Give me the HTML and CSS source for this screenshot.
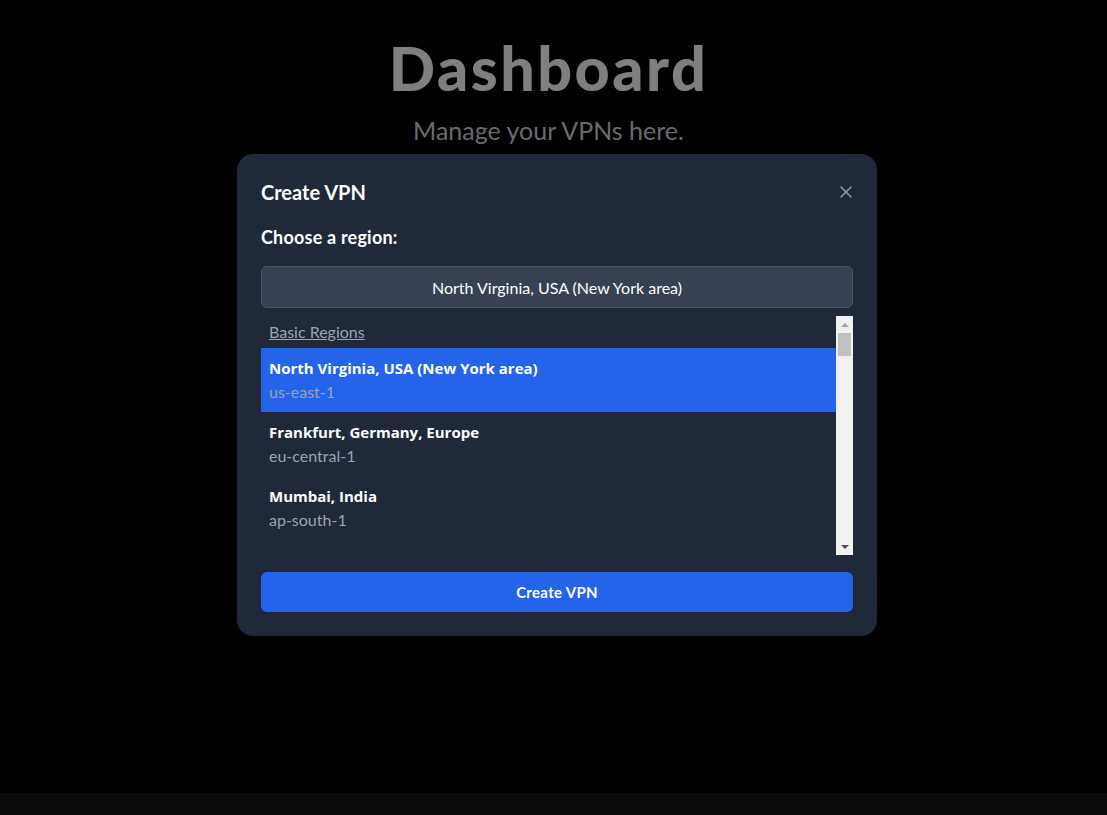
FILE: index.html
```html
<!DOCTYPE html>
<html lang="en">
<head>
  <meta charset="UTF-8">
  <title>Dashboard</title>
  <link rel="stylesheet" href="styles.css">
</head>
<body>

  <main class="page">
    <header class="page-header">
      <h1>Dashboard</h1>
      <p class="subtitle">Manage your VPNs here.</p>
    </header>
  </main>

  <footer class="footer"></footer>

  <div class="overlay">
    <div class="modal">
      <div class="modal-head">
        <h2>Create VPN</h2>
        <button class="close" aria-label="Close">
          <svg width="12" height="12" viewBox="0 0 12 12" fill="none" stroke="currentColor" stroke-width="1.4" stroke-linecap="round">
            <path d="M1 1 L11 11 M11 1 L1 11"/>
          </svg>
        </button>
      </div>

      <h3 class="label">Choose a region:</h3>

      <button class="select">North Virginia, USA (New York area)</button>

      <div class="list-wrap">
        <div class="region-list">
          <div class="group">Basic Regions</div>
          <div class="option selected">
            <div class="name">North Virginia, USA (New York area)</div>
            <div class="code">us-east-1</div>
          </div>
          <div class="option">
            <div class="name">Frankfurt, Germany, Europe</div>
            <div class="code">eu-central-1</div>
          </div>
          <div class="option">
            <div class="name">Mumbai, India</div>
            <div class="code">ap-south-1</div>
          </div>
          <div class="option">
            <div class="name">Canada (Central)</div>
            <div class="code">ca-central-1</div>
          </div>
          <div class="option">
            <div class="name">Tokyo, Japan</div>
            <div class="code">ap-northeast-1</div>
          </div>
          <div class="option">
            <div class="name">Sydney, Australia</div>
            <div class="code">ap-southeast-2</div>
          </div>
        </div>
        <div class="scrollbar">
          <span class="arrow up"></span>
          <span class="thumb"></span>
          <span class="arrow down"></span>
        </div>
      </div>

      <button class="create">Create VPN</button>
    </div>
  </div>

</body>
</html>
```

FILE: styles.css
```css
* {
  box-sizing: border-box;
}

body {
  margin: 0;
  min-height: 100vh;
  background: #000;
  font-family: Lato, "Open Sans", sans-serif;
  color: #fff;
  display: flex;
  flex-direction: column;
}

.page {
  flex: 1;
}

.page-header {
  text-align: center;
  padding-top: 34px;
  padding-right: 10px;
}

.page-header h1 {
  margin: 0;
  font-size: 61px;
  font-weight: 900;
  line-height: 68px;
  letter-spacing: 2.5px;
  color: #fff;
}

.subtitle {
  margin: 13px 0 0;
  font-size: 25px;
  line-height: 30px;
  color: #d1d5db;
}

.footer {
  height: 22px;
  background: #181818;
}

/* modal */
.overlay {
  position: fixed;
  inset: 0;
  background: rgba(0, 0, 0, 0.5);
  display: flex;
  justify-content: center;
  align-items: flex-start;
  padding-top: 154px;
  padding-left: 7px;
}

.modal {
  width: 640px;
  background: #1f2937;
  border-radius: 16px;
  padding: 24px;
}

.modal-head {
  display: flex;
  align-items: center;
  justify-content: space-between;
}

.modal-head h2 {
  margin: 0;
  font-size: 20px;
  font-weight: 700;
  line-height: 28px;
}

.close {
  background: none;
  border: none;
  color: #9ca3af;
  padding: 0;
  margin-right: 1px;
  display: flex;
  cursor: pointer;
}

.label {
  margin: 17px 0 0;
  font-size: 18px;
  font-weight: 700;
  line-height: 28px;
  letter-spacing: 0.2px;
}

.select {
  display: block;
  width: 100%;
  margin-top: 15px;
  height: 42px;
  background: #374151;
  border: 1px solid #4b5563;
  border-radius: 6px;
  color: #fff;
  font-family: inherit;
  font-size: 16px;
}

.list-wrap {
  display: flex;
  margin-top: 8px;
  height: 239px;
}

.region-list {
  flex: 1;
  overflow: hidden;
}

.scrollbar {
  width: 17px;
  background: #f1f1f1;
  display: flex;
  flex-direction: column;
  align-items: center;
}

.arrow {
  width: 0;
  height: 0;
  border-left: 4px solid transparent;
  border-right: 4px solid transparent;
}

.arrow.up {
  margin-top: 7px;
  border-bottom: 4px solid #a3a3a3;
}

.arrow.down {
  margin-top: auto;
  margin-bottom: 6px;
  border-top: 4px solid #505050;
}

.thumb {
  width: 13px;
  height: 23px;
  margin-top: 6px;
  background: #c1c1c1;
}

.group {
  padding: 4px 8px;
  font-size: 16px;
  line-height: 24px;
  color: #9ca3af;
  text-decoration: underline;
}

.option {
  padding: 8px;
  line-height: 24px;
  font-size: 16px;
}

.option.selected {
  background: #2563eb;
}

.name {
  font-family: "Open Sans", Lato, sans-serif;
  font-size: 15px;
  font-weight: 700;
}

.code {
  color: #9ca3af;
}

.create {
  display: block;
  width: 100%;
  margin-top: 17px;
  height: 40px;
  background: #2563eb;
  border: none;
  border-radius: 6px;
  color: #fff;
  font-family: inherit;
  font-size: 15px;
  font-weight: 700;
  letter-spacing: 0.3px;
  cursor: pointer;
}
```
